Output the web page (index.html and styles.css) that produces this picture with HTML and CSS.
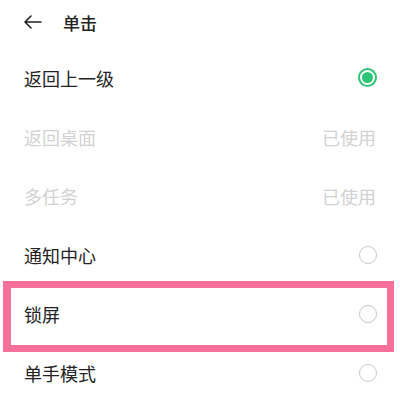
FILE: index.html
```html
<!DOCTYPE html>
<html lang="zh">
<head>
<meta charset="utf-8">
<link rel="stylesheet" href="styles.css">
</head>
<body>
<div class="page">
  <header class="bar">
    <svg class="back" width="19" height="14" viewBox="0 0 19 14"><path d="M18 7H2M8 1L2 7l6 6" fill="none" stroke="#222" stroke-width="1.6" stroke-linecap="round" stroke-linejoin="round"/></svg>
    <span class="title">单击</span>
  </header>
  <ul class="list">
    <li class="row"><span class="label">返回上一级</span><span class="radio on"></span></li>
    <li class="row dis"><span class="label">返回桌面</span><span class="used">已使用</span></li>
    <li class="row dis"><span class="label">多任务</span><span class="used">已使用</span></li>
    <li class="row"><span class="label">通知中心</span><span class="radio"></span></li>
    <li class="row hl"><span class="label">锁屏</span><span class="radio"></span><span class="mark"></span></li>
    <li class="row"><span class="label">单手模式</span><span class="radio"></span></li>
  </ul>
</div>
</body>
</html>
```
FILE: styles.css
```css
html, body { margin: 0; padding: 0; background: #fff; }
.page {
  width: 400px; height: 402px; overflow: hidden;
  font-family: "Noto Sans CJK SC", "Noto Sans", sans-serif;
  color: #222;
}
.bar { height: 48px; display: flex; align-items: center; padding-left: 23px; box-sizing: border-box; padding-bottom: 4px; }
.back { display: block; }
.title { margin-left: 21px; font-size: 17px; font-weight: 500; line-height: 1; }
.list { list-style: none; margin: 0; padding: 0; }
.row { position: relative; height: 59px; display: flex; align-items: center; justify-content: space-between; padding: 0 23px 0 24px; }
.label { font-size: 18px; line-height: 1; }
.dis .label, .used { color: #d2d2d2; }
.used { font-size: 18px; line-height: 1; margin-right: 1px; }
.radio { width: 18px; height: 18px; box-sizing: border-box; border: 1.5px solid #c8c8c8; border-radius: 50%; }
.radio.on { width: 19px; height: 19px; border: 2px solid #2cc576; position: relative; }
.radio.on::after { content: ""; position: absolute; inset: 2px; border-radius: 50%; background: #2cc576; }
.mark { position: absolute; left: 3px; top: -3px; width: 391px; height: 71px; box-sizing: border-box; border: 7px solid #f6709a; border-left-width: 8px; }
```
